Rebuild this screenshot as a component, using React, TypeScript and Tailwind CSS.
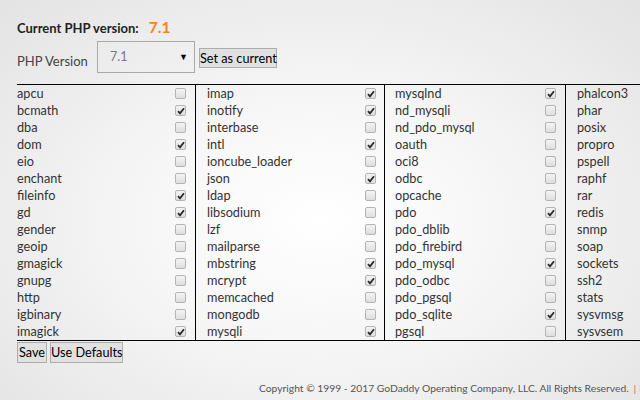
import React from "react";

type Item = [string, boolean];

const col1: Item[] = [
  ["apcu", false], ["bcmath", true], ["dba", false], ["dom", true], ["eio", false],
  ["enchant", false], ["fileinfo", true], ["gd", true], ["gender", false], ["geoip", false],
  ["gmagick", false], ["gnupg", false], ["http", false], ["igbinary", false], ["imagick", true],
];
const col2: Item[] = [
  ["imap", true], ["inotify", true], ["interbase", false], ["intl", true], ["ioncube_loader", false],
  ["json", true], ["ldap", false], ["libsodium", false], ["lzf", false], ["mailparse", false],
  ["mbstring", true], ["mcrypt", true], ["memcached", false], ["mongodb", false], ["mysqli", true],
];
const col3: Item[] = [
  ["mysqlnd", true], ["nd_mysqli", false], ["nd_pdo_mysql", false], ["oauth", false], ["oci8", false],
  ["odbc", false], ["opcache", false], ["pdo", true], ["pdo_dblib", false], ["pdo_firebird", false],
  ["pdo_mysql", true], ["pdo_odbc", false], ["pdo_pgsql", false], ["pdo_sqlite", true], ["pgsql", false],
];
const col4: string[] = [
  "phalcon3", "phar", "posix", "propro", "pspell", "raphf", "rar", "redis", "snmp", "soap",
  "sockets", "ssh2", "stats", "sysvmsg", "sysvsem",
];

function Box({ checked }: { checked: boolean }) {
  return (
    <span className="flex h-[11px] w-[11px] shrink-0 items-center justify-center rounded-[2px] border border-[#b4b4b4] bg-[linear-gradient(#f4f4f4,#dedede)]">
      {checked && (
        <svg width="8" height="8" viewBox="0 0 8 8">
          <path d="M1 4.2 L3 6.3 L7 1.2" fill="none" stroke="#2a2a2a" strokeWidth="1.8" />
        </svg>
      )}
    </span>
  );
}

function Column({ items, className }: { items: Item[]; className: string }) {
  return (
    <div className={className}>
      {items.map(([n, c]) => (
        <div key={n} className="flex h-[17px] items-center justify-between">
          <span className="leading-[17px]">{n}</span>
          <Box checked={c} />
        </div>
      ))}
    </div>
  );
}

export default function App() {
  return (
    <div
      className="relative h-[400px] w-[640px] overflow-hidden bg-[radial-gradient(ellipse_at_50%_55%,#ffffff_0%,#f6f6f6_40%,#e3e3e3_100%)] text-[#333] text-[12.7px]"
      style={{ fontFamily: '"Segoe UI", Lato, sans-serif' }}
    >
      <div className="pl-[17px] pt-[16px]">
        <div className="flex h-[18px] items-baseline">
          <span className="text-[13px] font-bold text-[#222]">Current PHP version:</span>
          <span className="ml-[10px] text-[15.5px] font-bold text-[#f5841f]">7.1</span>
        </div>
        <div className="mt-[7px] flex items-start">
          <span className="mt-[11px] w-[80px] text-[13px] text-[#444]">PHP Version</span>
          <div className="relative flex h-[32px] w-[98px] items-center border border-[#a9a9a9] pl-[12px] text-[12.5px] text-[#777]">
            7.1
            <span className="absolute right-[6px] top-[8px] text-[9px] text-black">▼</span>
          </div>
          <button className="ml-[4px] mt-[7px] h-[20px] w-[78px] whitespace-nowrap border border-[#adadad] bg-[#e1e1e1] px-0 text-[12.7px] leading-[18px] text-black">
            Set as current
          </button>
        </div>
      </div>

      <div className="ml-[17px] mt-[11px] flex w-[700px] border-y border-black">
        <Column items={col1} className="w-[178px] shrink-0 pr-[9px]" />
        <Column items={col2} className="w-[189px] shrink-0 border-l border-black pl-[11px] pr-[8px]" />
        <Column items={col3} className="w-[181px] shrink-0 border-l border-black pl-[10px] pr-[9px]" />
        <div className="shrink-0 border-l border-black pl-[11px]">
          {col4.map((n) => (
            <div key={n} className="h-[17px] leading-[17px]">{n}</div>
          ))}
        </div>
      </div>

      <div className="ml-[17px] mt-[1px] flex gap-[3px]">
        <button className="h-[21px] w-[30px] whitespace-nowrap border border-[#adadad] bg-[#e1e1e1] px-0 text-[12.7px] leading-[19px] text-black">Save</button>
        <button className="h-[21px] w-[73px] whitespace-nowrap border border-[#adadad] bg-[#e1e1e1] px-0 text-[12.7px] leading-[19px] text-black">Use Defaults</button>
      </div>

      <div className="mt-[18px] flex whitespace-nowrap pl-[259px] text-[10.3px] text-[#555]">
        <span>Copyright © 1999 - 2017 GoDaddy Operating Company, LLC. All Rights Reserved.</span>
        <span className="ml-[5px] text-[#b07050]">|</span>
        <span className="ml-[3px] text-[#555]">Help</span>
      </div>
    </div>
  );
}
